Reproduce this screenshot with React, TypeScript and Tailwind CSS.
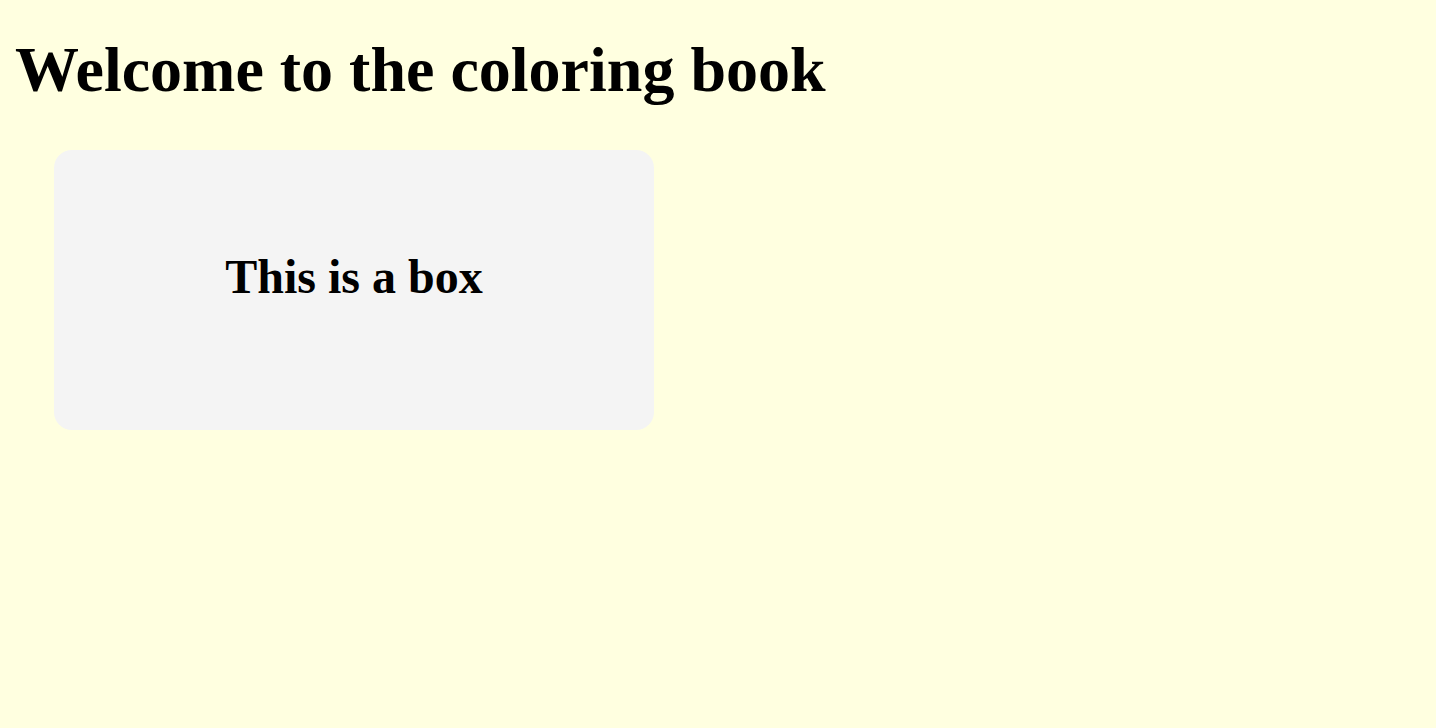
import React from "react";

export default function App() {
  return (
    <div className="min-h-[728px] w-full bg-[#ffffe0] px-[15px] pt-[30px] text-black [font-family:'Liberation_Serif',serif]">
      <h1 className="text-[64px] font-bold leading-[80px]">Welcome to the coloring book</h1>
      <div className="ml-[39px] mt-[40px] flex h-[280px] w-[600px] items-center justify-center rounded-[18px] bg-[#f4f4f4] pb-[26px]">
        <h2 className="text-[48px] font-bold leading-[56px]">This is a box</h2>
      </div>
    </div>
  );
}
